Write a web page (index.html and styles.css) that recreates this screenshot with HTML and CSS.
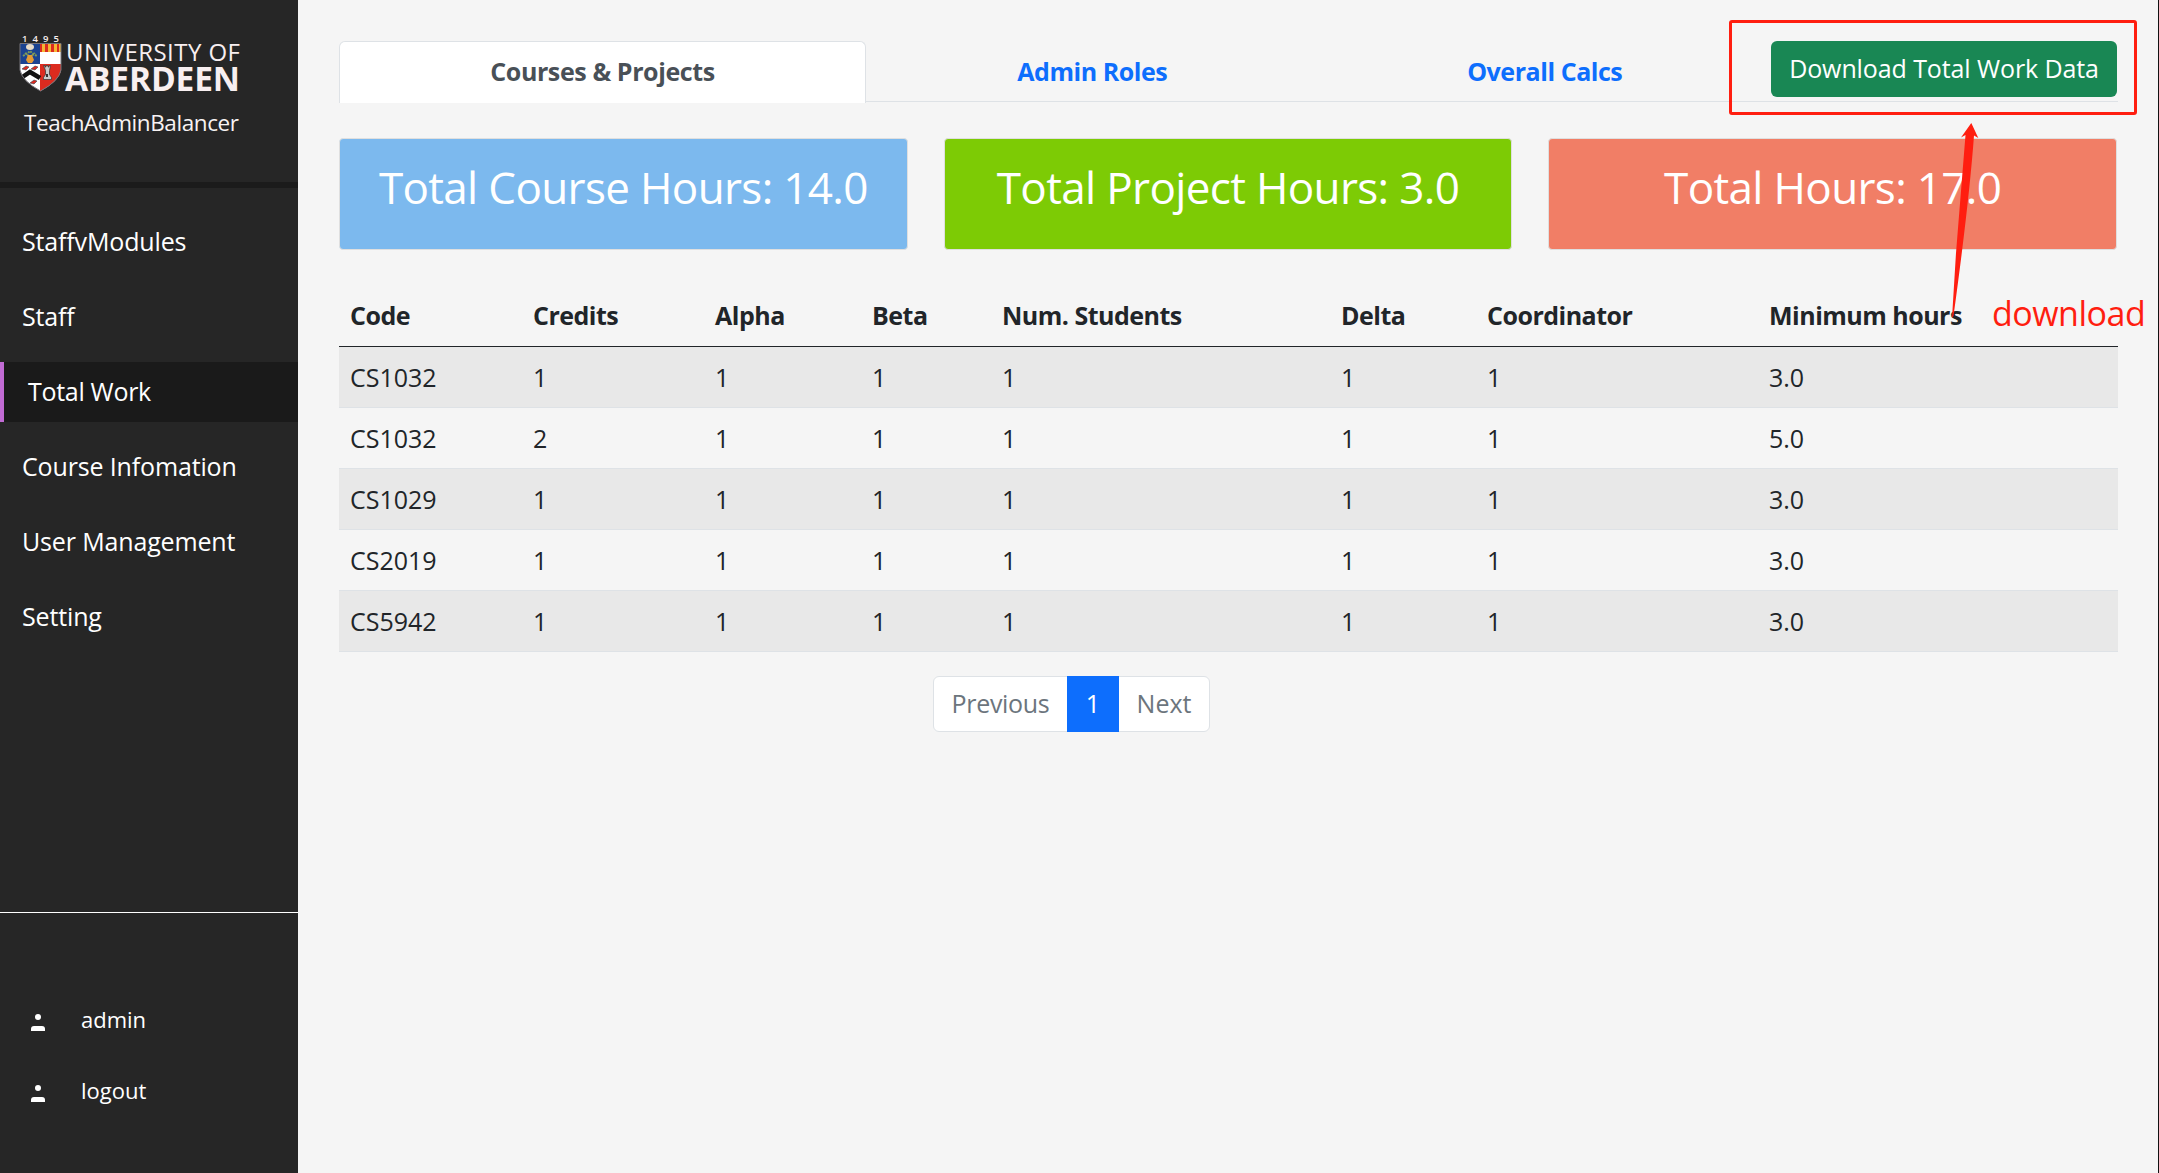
FILE: index.html
```html
<!DOCTYPE html>
<html lang="en">
<head>
<meta charset="utf-8">
<title>TeachAdminBalancer</title>
<link rel="stylesheet" href="styles.css">
</head>
<body>
<div class="app">
  <aside class="sidebar">
    <header class="brand">
      <svg class="logo" width="225" height="62" viewBox="0 0 225 62">
        <text class="logo-year" x="2" y="7" textLength="37">1495</text>
        <clipPath id="shield"><path d="M0 8H41V35Q39 46 20.500 56Q2 46 0 35Z"/></clipPath>
        <g clip-path="url(#shield)">
          <path fill="#fff" d="M0 8h41v49H0z"/>
          <path fill="#1b4391" d="M0 8h20v21H0z"/>
          <path fill="#dc2b1f" d="M20 8h21v9H20zM20 29h21v28H20z"/>
          <path fill="#f6b733" d="M22 8h3v9h-3zM28 8h3v9h-3zM34 8h3v9h-3zM39 8h2v9h-2z"/>
          <ellipse cx="10" cy="12" rx="4" ry="3" fill="#e8dcc8"/>
          <path stroke="#7f9a58" stroke-width="2" stroke-dasharray="2 1" fill="none" d="M3 21l5-3 2-2 2 2 5 3M5 18l5 4 5-4"/>
          <path fill="#e59a35" d="M8 20h4l2 5-2 3H8l-2-3z"/>
          <path fill="none" stroke="#111" stroke-width="4.500" d="M1 43l9-6 10 6"/>
          <path fill="#dc2b1f" stroke="#345" stroke-width=".6" d="M2 34l4-3 3 1-3 3zM11 34l4-3 3 1-3 3zM10 48l4-3 3 1-3 3z"/>
          <path fill="#c9c9c9" stroke="#333" stroke-width=".7" d="M23.500 30.500h1.500v1.500h1v-1.500h2v1.500h1v-1.500h1.500l-1 5v4l2 3v2h-8v-2l2-3v-4z"/>
          <path fill="#333" d="M26 39h2v3h-2z"/>
        </g>
        <path fill="none" stroke="#77747a" d="M0 8.500H41V35Q39 46 20.500 56Q2 46 0 35Z"/>
        <text class="logo-top" x="46" y="26" textLength="174">UNIVERSITY OF</text>
        <text class="logo-bottom" x="45" y="56" textLength="175">ABERDEEN</text>
      </svg>
      <div class="product">TeachAdminBalancer</div>
    </header>
    <nav class="menu">
      <a class="menu-item">StaffvModules</a>
      <a class="menu-item">Staff</a>
      <a class="menu-item active">Total Work</a>
      <a class="menu-item">Course Infomation</a>
      <a class="menu-item">User Management</a>
      <a class="menu-item">Setting</a>
    </nav>
    <footer class="account">
      <a class="account-item"><svg width="14" height="17" viewBox="0 0 14 17"><circle cx="7" cy="3" r="3"/><path d="M0 17v-2q0-3 3-3h8q3 0 3 3v2z"/></svg>admin</a>
      <a class="account-item"><svg width="14" height="17" viewBox="0 0 14 17"><circle cx="7" cy="3" r="3"/><path d="M0 17v-2q0-3 3-3h8q3 0 3 3v2z"/></svg>logout</a>
    </footer>
  </aside>
  <main class="content">
    <div class="tabs">
      <a class="tab selected">Courses &amp; Projects</a>
      <a class="tab">Admin Roles</a>
      <a class="tab">Overall Calcs</a>
      <button class="download">Download Total Work Data</button>
    </div>
    <section class="totals">
      <div class="total blue">Total Course Hours: 14.0</div>
      <div class="total green">Total Project Hours: 3.0</div>
      <div class="total coral">Total Hours: 17.0</div>
    </section>
    <table class="courses">
      <colgroup><col class="c1"><col class="c2"><col class="c3"><col class="c4"><col class="c5"><col class="c6"><col class="c7"><col></colgroup>
      <thead><tr><th>Code</th><th>Credits</th><th>Alpha</th><th>Beta</th><th>Num. Students</th><th>Delta</th><th>Coordinator</th><th>Minimum hours</th></tr></thead>
      <tbody>
        <tr><td>CS1032</td><td>1</td><td>1</td><td>1</td><td>1</td><td>1</td><td>1</td><td>3.0</td></tr>
        <tr><td>CS1032</td><td>2</td><td>1</td><td>1</td><td>1</td><td>1</td><td>1</td><td>5.0</td></tr>
        <tr><td>CS1029</td><td>1</td><td>1</td><td>1</td><td>1</td><td>1</td><td>1</td><td>3.0</td></tr>
        <tr><td>CS2019</td><td>1</td><td>1</td><td>1</td><td>1</td><td>1</td><td>1</td><td>3.0</td></tr>
        <tr><td>CS5942</td><td>1</td><td>1</td><td>1</td><td>1</td><td>1</td><td>1</td><td>3.0</td></tr>
      </tbody>
    </table>
    <div class="pagination"><span class="page prev">Previous</span><span class="page current">1</span><span class="page next">Next</span></div>
  </main>
  <div class="highlight"></div>
  <svg class="arrow" width="27" height="196" viewBox="0 0 27 196"><path fill="#ff1e10" d="M0 195L4 130 13.500 12 9 14.500 19.300 0 26.300 15 22 12.500Q17 80 1.500 193Z"/></svg>
  <div class="note">download</div>
</div>
</body>
</html>
```
FILE: styles.css
```css
* { box-sizing: border-box; }
body {
  margin: 0;
  background: #f5f5f5;
  color: #212529;
  font: 25px/36px "Open Sans", "Noto Sans", sans-serif;
}
.app {
  position: relative;
  display: flex;
  height: 1173px;
  overflow: hidden;
  border-right: 1px solid #111;
}
.sidebar {
  display: flex;
  flex-direction: column;
  flex: none;
  width: 298px;
  background: #262626;
  color: #fff;
}
.brand {
  height: 188px;
  padding: 35px 0 0 20px;
  border-bottom: 6px solid #1b1b1b;
}
.logo { display: block; overflow: visible; }
.logo text { fill: #f8eff0; font-family: "Open Sans", "Noto Sans", sans-serif; }
.logo .logo-year { font-size: 9.5px; font-weight: 600; }
.logo .logo-top { font-size: 24px; }
.logo .logo-bottom { font-size: 33.5px; font-weight: 700; }
.product {
  padding: 8px 0 0 4px;
  color: #f8f3f3;
  font-size: 22.5px;
  letter-spacing: -0.42px;
}
.menu {
  display: flex;
  flex-direction: column;
  gap: 15px;
  padding-top: 24px;
}
.menu-item {
  height: 60px;
  padding-left: 22px;
  line-height: 59px;
  letter-spacing: -0.15px;
}
.menu-item.active {
  padding-left: 24px;
  border-left: 4px solid #c16bd4;
  background: #1a1a1a;
  letter-spacing: -0.3px;
}
.account {
  display: flex;
  flex-direction: column;
  gap: 35px;
  height: 261px;
  margin-top: auto;
  padding: 88px 0 0 31px;
  border-top: 1px solid #fff;
  font-size: 22px;
}
.account-item { display: flex; align-items: center; gap: 36px; }
.account-item svg { fill: #fff; position: relative; top: 3px; }
.content {
  flex: 1;
  padding: 41px 40px 0 41px;
}
.tabs {
  display: flex;
  height: 61px;
  border-bottom: 1px solid #dee2e6;
}
.tab {
  flex: 1;
  color: #0d6efd;
  font-weight: 700;
  line-height: 60px;
  letter-spacing: -0.45px;
  text-align: center;
}
.tab.selected {
  flex: none;
  width: 527px;
  height: 62px;
  border: 1px solid #dee2e6;
  border-bottom: 0;
  border-radius: 6px 6px 0 0;
  background: #fff;
  color: #495057;
  line-height: 58px;
  letter-spacing: -0.4px;
}
.download {
  width: 346px;
  height: 56px;
  margin: 0 1px 0 0;
  padding: 0 0 2px;
  border: 0;
  border-radius: 6px;
  background: #198754;
  color: #fff;
  font: inherit;
  letter-spacing: -0.1px;
}
.totals {
  display: grid;
  grid-template-columns: repeat(3, 1fr);
  gap: 36px;
  margin: 36px 1px 35px 0;
}
.total {
  height: 112px;
  padding-top: 22px;
  border: 1px solid #dfdfdf;
  border-radius: 4px;
  color: #fff;
  font-size: 44px;
  line-height: 53px;
  letter-spacing: -0.65px;
  text-align: center;
}
.blue { background: #7cb9ee; }
.green { background: #7dcb05; }
.coral { background: #f17e66; }
.courses {
  width: 100%;
  border-collapse: separate;
  border-spacing: 0;
  table-layout: fixed;
}
.courses th, .courses td {
  height: 61px;
  padding: 0 0 1px 11px;
  border-bottom: 1px solid #dee2e6;
  text-align: left;
}
.courses th {
  height: 62px;
  padding-bottom: 2px;
  border-bottom-color: #212529;
  font-weight: 700;
  letter-spacing: -0.5px;
}
.courses tbody tr:nth-child(odd) { background: #e8e8e8; }
.c1 { width: 183px; }
.c2 { width: 182px; }
.c3 { width: 157px; }
.c4 { width: 130px; }
.c5 { width: 339px; }
.c6 { width: 146px; }
.c7 { width: 282px; }
.pagination {
  display: flex;
  width: 277px;
  height: 56px;
  margin: 24px 0 0 594px;
  border: 1px solid #dee2e6;
  border-radius: 6px;
  background: #fff;
  color: #6c757d;
  line-height: 52px;
  text-align: center;
}
.prev { width: 133px; letter-spacing: -0.3px; }
.current {
  width: 52px;
  margin: -1px 0;
  background: #0d6efd;
  color: #fff;
  line-height: 54px;
}
.next { flex: 1; }
.highlight {
  position: absolute;
  top: 20px;
  left: 1729px;
  width: 408px;
  height: 95px;
  border: 3px solid #ff1e10;
  border-radius: 3px;
}
.arrow {
  position: absolute;
  top: 123px;
  left: 1952px;
  overflow: visible;
}
.note {
  position: absolute;
  top: 295px;
  left: 1992px;
  color: #ff1e10;
  font-size: 34px;
  letter-spacing: -0.5px;
}
```
